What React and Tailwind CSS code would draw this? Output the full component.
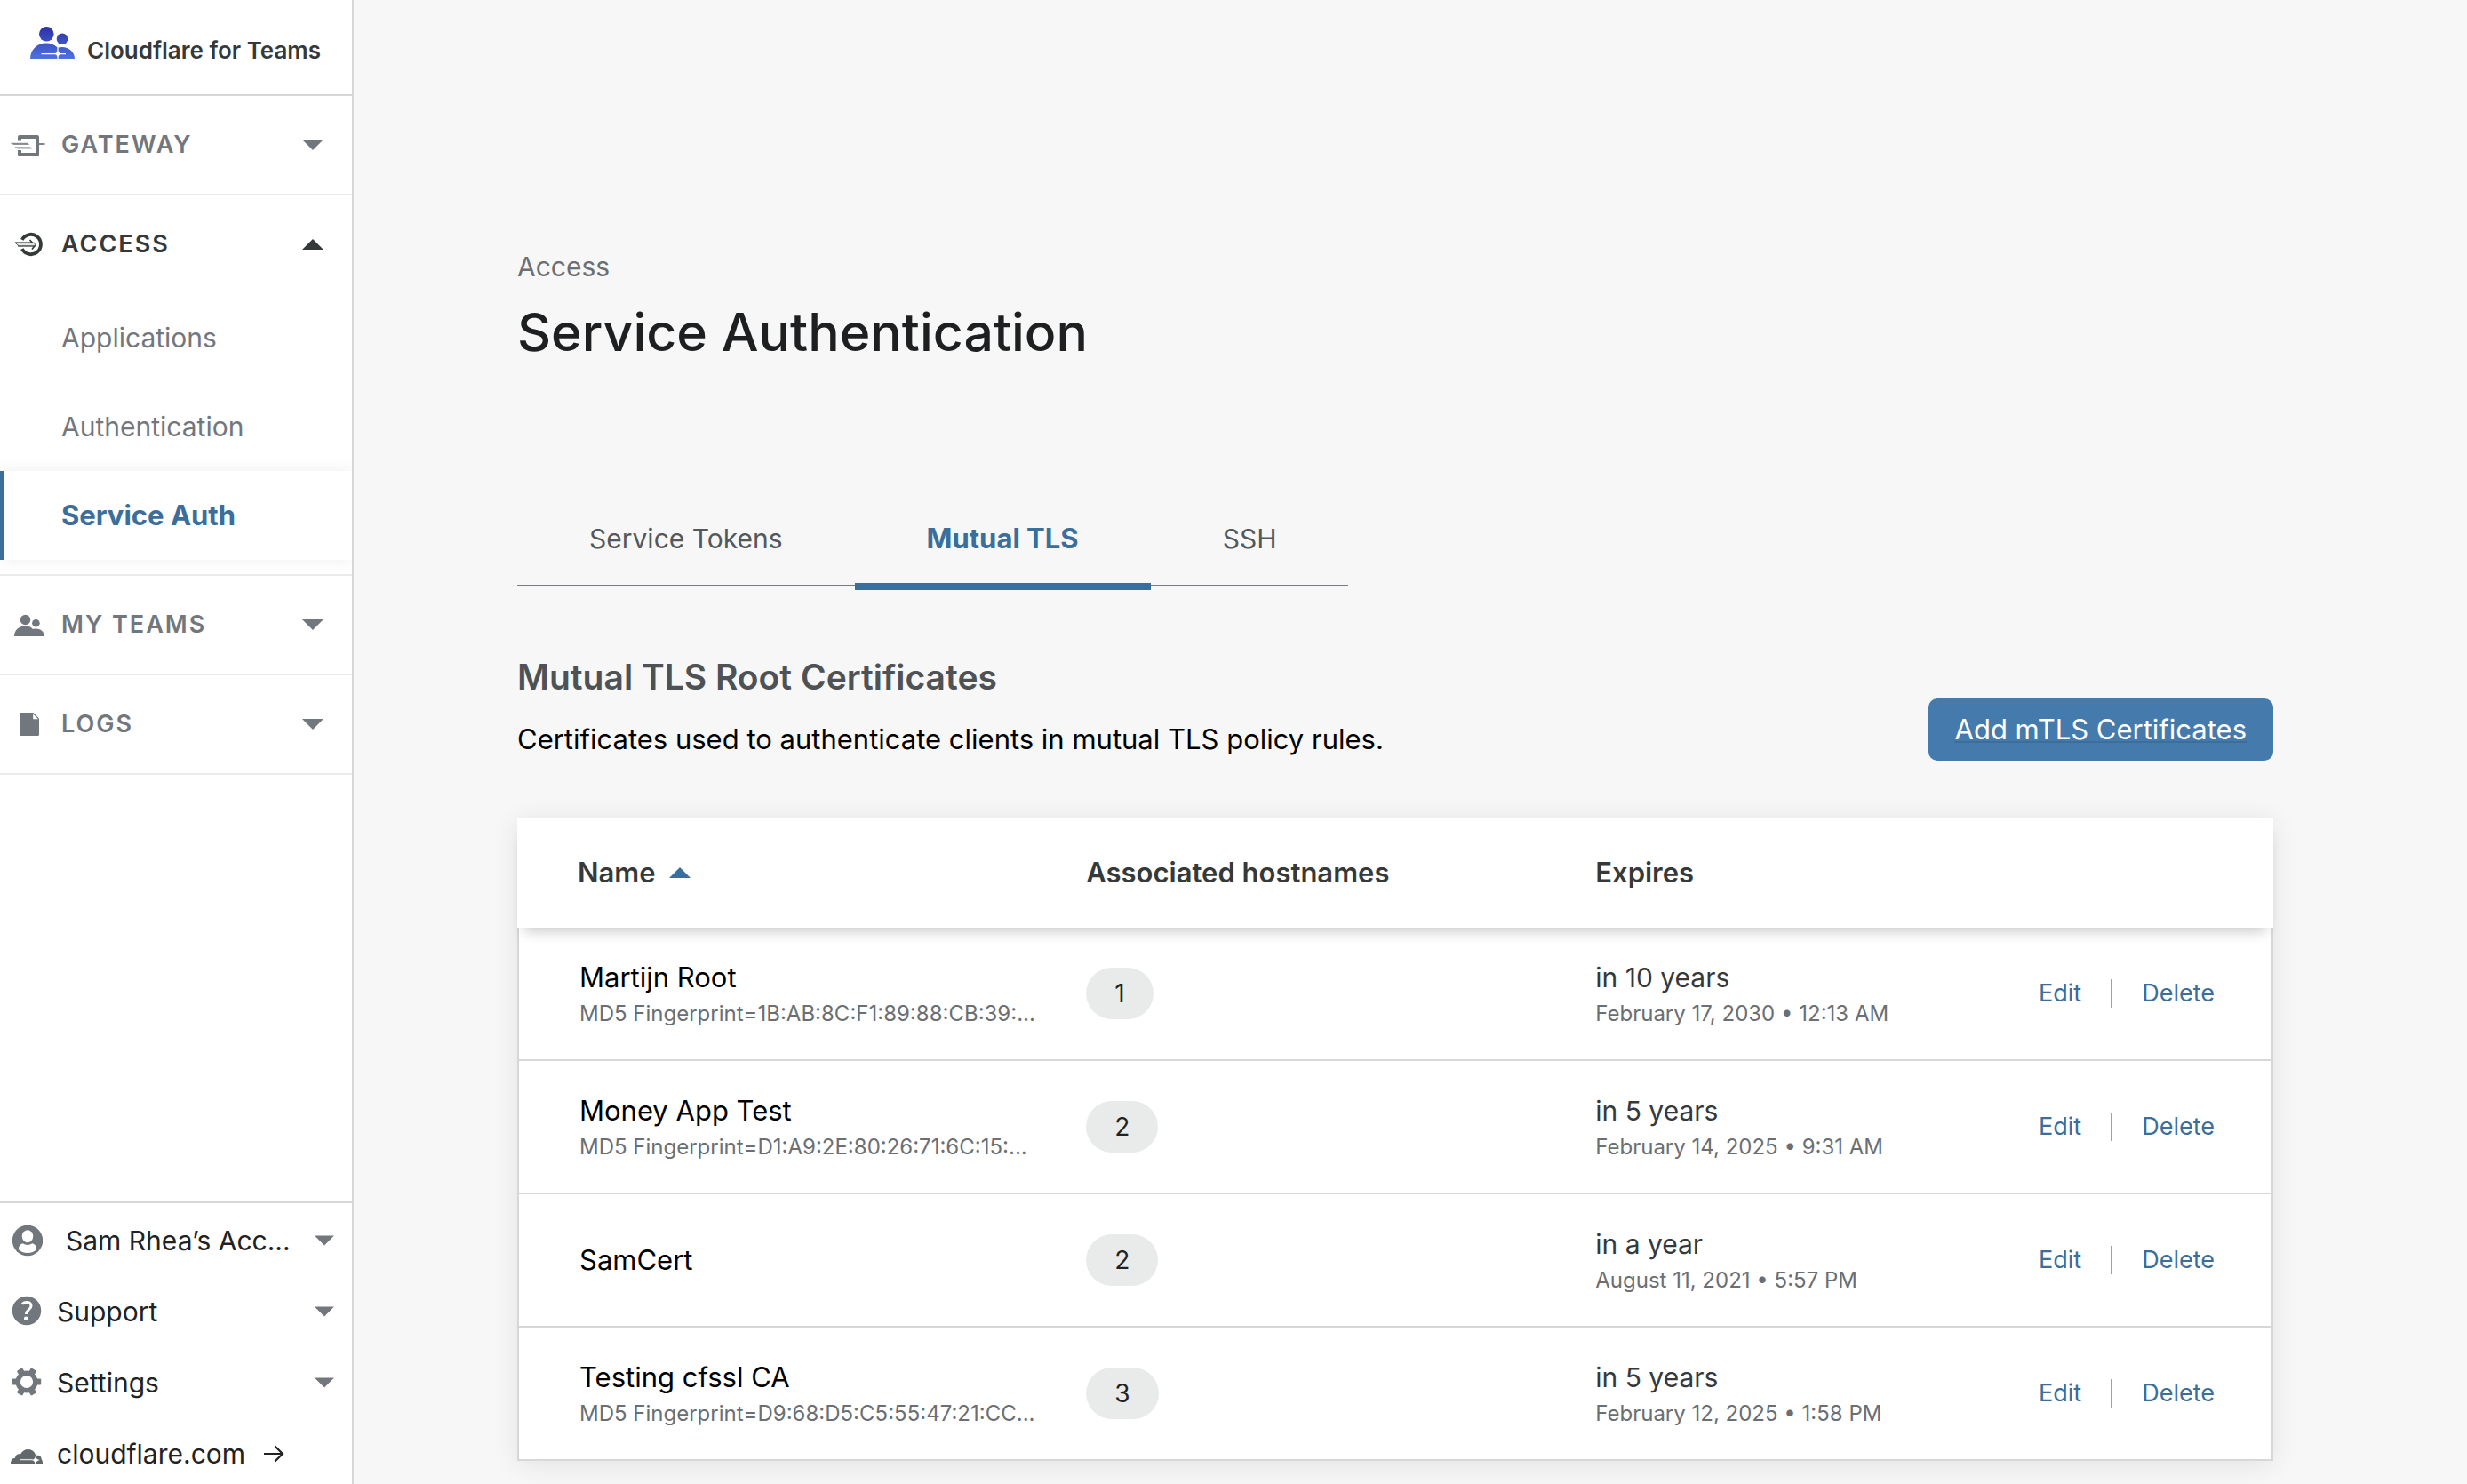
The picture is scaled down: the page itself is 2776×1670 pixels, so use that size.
function Caret({ up = false, className }) {
  return (
    <svg viewBox="0 0 24 12" className={className} fill="currentColor" aria-hidden="true">
      <path d={up ? 'M0 12L12 0l12 12z' : 'M0 0h24L12 12z'} />
    </svg>
  );
}

function TeamsLogo() {
  return (
    <svg viewBox="0 0 50 36" className="h-9 w-[50px] shrink-0" aria-hidden="true">
      <defs>
        <linearGradient id="logo-fill" x1="0" y1="0" x2="0" y2="36" gradientUnits="userSpaceOnUse">
          <stop offset="0" stopColor="#2d2fa6" />
          <stop offset="1" stopColor="#4c74dc" />
        </linearGradient>
      </defs>
      <g fill="url(#logo-fill)">
        <circle cx="18.3" cy="8.3" r="8.3" />
        <circle cx="36" cy="13.8" r="6.3" />
        <path d="M0 36C0 26 8 18.6 18 18.6c4.800 0 9.200 1.700 12.400 4.600V36z" />
        <path d="M31.600 23.600c1.300-.4 2.700-.6 4.200-.6C43.500 23 50 28.800 50 36H31.600z" />
      </g>
      <path
        d="M12.500 30H27.500c1.800-.2 3-1.300 3.500-3.200.5 1.900 1.700 3 3.500 3.200H40v1.300h-5.500c-1.800.2-3 1.200-3.500 3.100-.5-1.900-1.700-2.900-3.500-3.100h-15z"
        fill="#fff"
      />
    </svg>
  );
}

function GatewayIcon() {
  return (
    <svg viewBox="0 0 40 40" className="size-10 shrink-0" fill="none" stroke="currentColor" aria-hidden="true">
      <path d="M10 15.500V11h20v20H10v-5" strokeWidth="4" strokeLinejoin="round" />
      <path d="M.5 18.200h18.500l1.500 1.300H3.500zM5 22.800h17l1.500 1.300H8z" fill="currentColor" strokeWidth=".6" />
      <path d="M32 19h6.500" strokeWidth="1.800" />
    </svg>
  );
}

function AccessIcon() {
  return (
    <svg viewBox="0 0 40 40" className="size-10 shrink-0" fill="none" stroke="currentColor" aria-hidden="true">
      <path d="M12.800 14.800A11.200 11.200 0 1 1 12.800 25.200" strokeWidth="3.800" />
      <path d="M5 18.200h19.500l-3-3.200M8 21.800h19l-3 3.800" strokeWidth="1.600" />
      <path d="M5 18.200h22l.5 3.600H9z" strokeWidth=".8" fill="#e3e6e0" />
    </svg>
  );
}

function PeopleIcon() {
  return (
    <svg viewBox="0 0 40 40" className="size-10 shrink-0" fill="currentColor" aria-hidden="true">
      <circle cx="16.500" cy="14.500" r="5.700" />
      <circle cx="28.400" cy="18.300" r="4.300" />
      <path d="M4 33c0-6.700 5.600-11.700 12.500-11.700 3.400 0 6.300 1.300 8.500 3.700C31.500 23.300 38 27 38 33z" />
    </svg>
  );
}

function LogsIcon() {
  return (
    <svg viewBox="0 0 40 40" className="size-10 shrink-0" aria-hidden="true">
      <path d="M11.500 7H25.500L32 13.500V31.500a1.500 1.500 0 0 1-1.500 1.500h-19a1.500 1.500 0 0 1-1.500-1.500v-23A1.500 1.500 0 0 1 11.500 7z" fill="currentColor" />
      <path d="M25.200 8.500V14.300H31z" fill="#fff" />
    </svg>
  );
}

function UserIcon() {
  return (
    <svg viewBox="0 0 36 36" className="size-9 shrink-0" aria-hidden="true">
      <circle cx="19" cy="18" r="17.200" fill="currentColor" />
      <ellipse cx="19" cy="13.300" rx="6.200" ry="7" fill="#fff" />
      <path d="M8.800 28c0-3.600 2-6 5-6.700 1.500 1.100 3.300 1.700 5.200 1.700s3.700-.6 5.200-1.700c3 .7 5 3.100 5 6.700-2.400 2.700-6 4-10.200 4s-7.800-1.300-10.200-4z" fill="#fff" />
    </svg>
  );
}

function HelpIcon() {
  return (
    <svg viewBox="0 0 36 36" className="size-9 shrink-0" fill="none" aria-hidden="true">
      <circle cx="18" cy="17" r="16.200" fill="currentColor" />
      <path d="M13 9.500c1.300-1.300 3-2 5-2 3.200 0 5 1.700 5 4.200 0 4.200-5.600 4.300-5.600 9.300" stroke="#fff" strokeWidth="3" />
      <circle cx="17.200" cy="25.700" r="2.300" fill="#fff" />
    </svg>
  );
}

function GearIcon() {
  return (
    <svg viewBox="0 0 36 36" className="size-9 shrink-0" fill="none" stroke="currentColor" aria-hidden="true">
      <circle cx="18" cy="17" r="9.800" strokeWidth="5.400" />
      {[0, 60, 120, 180, 240, 300].map((angle) => (
        <path
          key={angle}
          d="M29 13.400h4.600l.6 1.200v4.800l-.6 1.200H29z"
          fill="currentColor"
          stroke="none"
          transform={`rotate(${angle} 18 17)`}
        />
      ))}
    </svg>
  );
}

function CloudIcon() {
  return (
    <svg viewBox="0 0 36 36" className="size-9 shrink-0" aria-hidden="true">
      <path
        d="M0 29c0-3.600 2-6 5-6.200.2-3.300 3-5.300 6-4.300C12.800 15 16 13 19.500 13c4.500 0 8 3 8.700 6.800C32.500 19 35 21.500 34.500 24c1 .9 1.500 2.700 1.500 5z"
        fill="#62676a"
      />
      <path d="M10 24.600h14.500" stroke="#d9dbdc" strokeWidth="1.400" />
      <path d="M23.500 25c2.500-.3 4-1.700 4.500-4.800.5 3.100 2 4.500 5 4.800-2.600.3-4 1.500-4.600 4h-1c-.5-2.500-1.500-3.700-3.900-4z" fill="#fff" />
    </svg>
  );
}

function ArrowRight() {
  return (
    <svg viewBox="0 0 24 20" className="h-5 w-6" fill="none" stroke="currentColor" strokeWidth="2.200" aria-hidden="true">
      <path d="M1 10h21M13.500 1.500L22 10l-8.500 8.500" />
    </svg>
  );
}

function NavHeader({ icon, label, open = false }) {
  return (
    <button
      type="button"
      aria-expanded={open}
      className={`flex w-full items-center gap-[17px] pr-8 pl-3 ${
        open ? 'h-[110px] text-[#36393a]' : 'h-28 border-b-2 border-[#eaebeb] text-[#72777d]'
      }`}
    >
      {icon}
      <span className="flex-1 text-left text-[27px] font-semibold tracking-[2px]">{label}</span>
      <Caret up={open} className="h-3 w-6" />
    </button>
  );
}

function SubLink({ label, active = false }) {
  return (
    <a
      href="#"
      aria-current={active ? 'page' : undefined}
      className={
        active
          ? 'flex h-[100px] items-center border-l-4 border-[#3b6e9a] bg-white pl-[65px] text-[31px] font-bold text-[#3b6e9a] shadow-[0_0_18px_rgba(0,0,0,0.07)]'
          : 'flex h-[100px] items-center pl-[69px] text-[30px] text-[#72777d]'
      }
    >
      {label}
    </a>
  );
}

const footerItems = [
  { label: 'Support', icon: <HelpIcon /> },
  { label: 'Settings', icon: <GearIcon /> },
];

function Sidebar() {
  return (
    <aside className="flex w-[398px] shrink-0 flex-col overflow-hidden border-r-2 border-[#d5d7d8] bg-white">
      <div className="flex h-[108px] items-center gap-[14px] border-b-2 border-[#d5d7d8] pb-2.5 pl-[34px]">
        <TeamsLogo />
        <span className="pt-4 text-[26px] font-semibold text-[#36393a]">Cloudflare for Teams</span>
      </div>
      <nav aria-label="Main">
        <NavHeader icon={<GatewayIcon />} label="GATEWAY" />
        <div className="overflow-hidden border-b-2 border-[#eaebeb] pb-4">
          <NavHeader icon={<AccessIcon />} label="ACCESS" open />
          <SubLink label="Applications" />
          <SubLink label="Authentication" />
          <SubLink label="Service Auth" active />
        </div>
        <NavHeader icon={<PeopleIcon />} label="MY TEAMS" />
        <NavHeader icon={<LogsIcon />} label="LOGS" />
      </nav>
      <div className="mt-auto flex flex-col gap-11 border-t-2 border-[#d5d7d8] pt-6 pr-5 pb-4 pl-3 text-[30px] leading-9 text-[#222]">
        <button type="button" className="flex items-center text-left">
          <span className="text-[#72777d]"><UserIcon /></span>
          <span className="flex-1 pl-[26px]">Sam Rhea’s Acc...</span>
          <Caret className="h-3 w-[22px] text-[#72777d]" />
        </button>
        {footerItems.map((item) => (
          <button key={item.label} type="button" className="flex items-center text-left">
            <span className="text-[#72777d]">{item.icon}</span>
            <span className="flex-1 pl-4">{item.label}</span>
            <Caret className="h-3 w-[22px] text-[#72777d]" />
          </button>
        ))}
        <a href="#" className="flex items-center">
          <CloudIcon />
          <span className="pr-5 pl-4">cloudflare.com</span>
          <ArrowRight />
        </a>
      </div>
    </aside>
  );
}

const tabs = ['Service Tokens', 'Mutual TLS', 'SSH'];

function Tabs() {
  return (
    <div role="tablist" className="mt-[178px] flex w-fit border-b-2 border-[#797d82]">
      {tabs.map((tab) => {
        const active = tab === 'Mutual TLS';
        return (
          <button
            key={tab}
            type="button"
            role="tab"
            aria-selected={active}
            className={
              active
                ? "relative px-[81px] pb-[34px] text-[31px] leading-9 font-bold text-[#3b6e9a] after:absolute after:inset-x-0 after:-bottom-1.5 after:h-2 after:bg-[#3b6e9a] after:content-['']"
                : 'px-[81px] pb-[34px] text-[30px] leading-9 text-[#54585b]'
            }
          >
            {tab}
          </button>
        );
      })}
    </div>
  );
}

const certificates = [
  { name: 'Martijn Root', print: 'MD5 Fingerprint=1B:AB:8C:F1:89:88:CB:39:...', hosts: 1, expires: 'in 10 years', date: 'February 17, 2030 • 12:13 AM' },
  { name: 'Money App Test', print: 'MD5 Fingerprint=D1:A9:2E:80:26:71:6C:15:...', hosts: 2, expires: 'in 5 years', date: 'February 14, 2025 • 9:31 AM' },
  { name: 'SamCert', hosts: 2, expires: 'in a year', date: 'August 11, 2021 • 5:57 PM' },
  { name: 'Testing cfssl CA', print: 'MD5 Fingerprint=D9:68:D5:C5:55:47:21:CC...', hosts: 3, expires: 'in 5 years', date: 'February 12, 2025 • 1:58 PM' },
];

function CertificateTable() {
  return (
    <table className="mt-16 w-full table-fixed border-separate border-spacing-0 bg-white text-left shadow-[0_4px_28px_rgba(0,0,0,0.09)]">
      <colgroup>
        <col className="w-[32.4%]" />
        <col className="w-[29%]" />
        <col className="w-[22%]" />
        <col />
      </colgroup>
      <thead className="relative bg-white text-[31px] text-[#36393a] shadow-[0_12px_14px_-8px_rgba(0,0,0,0.22)]">
        <tr className="h-[124px]">
          <th scope="col" aria-sort="ascending" className="pl-[68px] font-semibold">
            <button type="button" className="flex items-center gap-[15px]">
              Name
              <Caret up className="h-3 w-6 text-[#3b6e9a]" />
            </button>
          </th>
          <th scope="col" className="font-semibold">Associated hostnames</th>
          <th scope="col" className="font-semibold">Expires</th>
          <td />
        </tr>
      </thead>
      <tbody>
        {certificates.map((cert) => (
          <tr key={cert.name} className="h-[150px] *:border-b-2 *:border-[#d5d7d8]">
            <td className="border-l-2 pl-[68px]">
              <div className={cert.print ? 'pt-0.5' : ''}>
                <div className="text-[31px] leading-11 text-black">{cert.name}</div>
                {cert.print && <div className="text-2xl leading-[38px] text-[#6b6f73]">{cert.print}</div>}
              </div>
            </td>
            <td>
              <span className="inline-flex h-[58px] items-center rounded-full bg-[#e9ebeb] px-8 align-middle text-[28px] text-[#222]">
                {cert.hosts}
              </span>
            </td>
            <td className="whitespace-nowrap">
              <div className="pt-0.5">
                <div className="text-[30px] leading-11 text-[#36393a]">{cert.expires}</div>
                <div className="text-2xl leading-[38px] text-[#6b6f73]">{cert.date}</div>
              </div>
            </td>
            <td className="border-r-2 pr-16">
              <div className="flex items-center justify-end gap-[33px] text-[27px] text-[#3b6e9a]">
                <a href="#">Edit</a>
                <span className="h-8 w-0.5 bg-[#9ea2a6]" />
                <button type="button">Delete</button>
              </div>
            </td>
          </tr>
        ))}
      </tbody>
    </table>
  );
}

export default function App() {
  return (
    <div className="flex min-h-screen bg-[#f7f7f7] font-['Inter','Liberation_Sans',sans-serif]">
      <Sidebar />
      <main className="min-w-0 flex-1 pt-[282px] pr-[218px] pb-6 pl-[184px]">
        <p className="text-[30px] leading-9 text-[#6b6f73]">Access</p>
        <h1 className="mt-5 text-[59px] leading-[72px] font-medium text-[#1d1f20]">Service Authentication</h1>
        <Tabs />
        <section>
          <div className="mt-[78px] flex items-end justify-between">
            <div className="pb-0.5">
              <h2 className="text-[39px] leading-12 font-semibold text-[#4e5255]">Mutual TLS Root Certificates</h2>
              <p className="mt-6 text-[31px] leading-11 text-black">
                Certificates used to authenticate clients in mutual TLS policy rules.
              </p>
            </div>
            <a
              href="#"
              className="flex h-[70px] items-center rounded-[10px] bg-[#447aac] px-[30px] text-[31px] text-white underline decoration-[#3b6e9a] decoration-2 underline-offset-2"
            >
              Add mTLS Certificates
            </a>
          </div>
          <CertificateTable />
        </section>
      </main>
    </div>
  );
}
